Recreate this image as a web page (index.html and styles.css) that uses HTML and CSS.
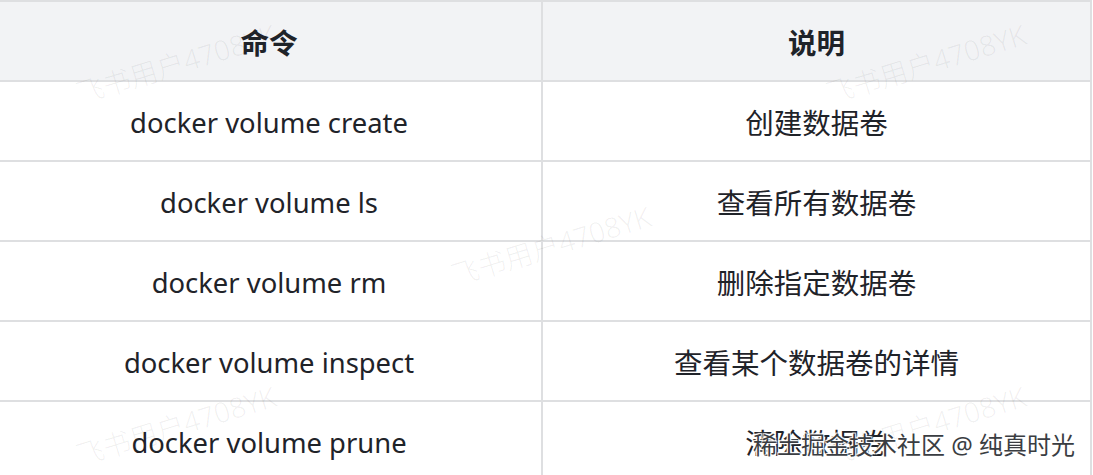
FILE: index.html
```html
<!DOCTYPE html>
<html lang="zh-CN">
<head>
<meta charset="utf-8">
<title>docker volume</title>
<link rel="stylesheet" href="styles.css">
</head>
<body>
<div class="page">
  <table class="cmd-table">
    <colgroup>
      <col class="col-cmd">
      <col class="col-desc">
    </colgroup>
    <thead>
      <tr><th class="cjk">命令</th><th class="cjk">说明</th></tr>
    </thead>
    <tbody>
      <tr><td>docker volume create</td><td class="cjk">创建数据卷</td></tr>
      <tr><td>docker volume ls</td><td class="cjk">查看所有数据卷</td></tr>
      <tr><td>docker volume rm</td><td class="cjk">删除指定数据卷</td></tr>
      <tr><td>docker volume inspect</td><td class="cjk">查看某个数据卷的详情</td></tr>
      <tr><td>docker volume prune</td><td class="cjk">清除数据卷</td></tr>
    </tbody>
  </table>
  <span class="wm wm-1">飞书用户4708YK</span>
  <span class="wm wm-2">飞书用户4708YK</span>
  <span class="wm wm-3">飞书用户4708YK</span>
  <span class="wm wm-4">飞书用户4708YK</span>
  <span class="wm wm-5">飞书用户4708YK</span>
  <span class="site-mark">稀土掘金技术社区 @ 纯真时光</span>
</div>
</body>
</html>
```

FILE: styles.css
```css
html, body {
  margin: 0;
  padding: 0;
  background: #ffffff;
}

.page {
  position: relative;
  width: 1093px;
  height: 475px;
  overflow: hidden;
  font-family: "Noto Sans", "Noto Sans CJK SC", sans-serif;
  color: #1f2329;
}

.cmd-table {
  border-collapse: collapse;
  table-layout: fixed;
  width: 1095px;
  margin-left: -5px;
  font-size: 27.4px;
}

.col-cmd { width: 546px; }
.col-desc { width: 549px; }

.cmd-table th,
.cmd-table td {
  border: 2px solid #dedfe1;
  text-align: center;
  vertical-align: middle;
  height: 74px;
  padding: 4px 0 0 0;
  line-height: 1.2;
}

.cmd-table .cjk {
  font-size: 28.5px;
}

.cmd-table th {
  background: #f2f3f5;
  font-weight: 700;
}

.wm {
  position: absolute;
  font-size: 28px;
  font-weight: 300;
  color: rgba(31, 35, 41, 0.065);
  transform: rotate(-17deg);
  transform-origin: left bottom;
  white-space: nowrap;
  pointer-events: none;
}

.wm-1 { left: 82px; top: 72px; }
.wm-2 { left: 832px; top: 72px; }
.wm-3 { left: 457px; top: 254px; }
.wm-4 { left: 82px; top: 434px; }
.wm-5 { left: 832px; top: 434px; }

.site-mark {
  position: absolute;
  right: 18px;
  top: 426px;
  font-size: 24px;
  color: #3a3d42;
  white-space: nowrap;
  text-shadow: 1px 1px 1px #ffffff, -1px -1px 1px #ffffff, 1px -1px 1px #ffffff, -1px 1px 1px #ffffff;
}
```
